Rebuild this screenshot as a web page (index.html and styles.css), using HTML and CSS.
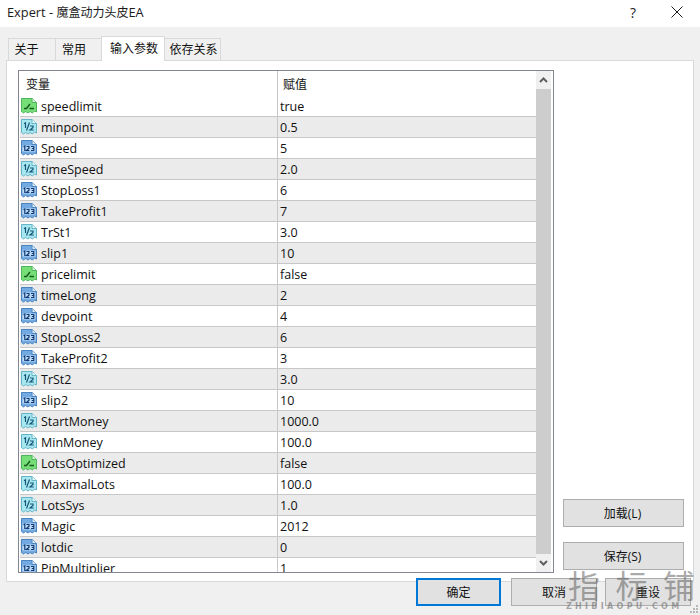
FILE: index.html
```html
<!DOCTYPE html>
<html lang="zh">
<head>
<meta charset="utf-8">
<title>Expert</title>
<link rel="stylesheet" href="styles.css">
</head>
<body>
<svg class="defs" width="0" height="0" aria-hidden="true">
  <symbol id="t-bool" viewBox="0 0 16 16">
    <path d="M.5 .5H11L15.500 4.500V14L13.500 13 11.500 15 9 13.500 7 15 4.500 13.500 2.500 15 .5 13.500Z" fill="#76de76" stroke="#4fb45f"/>
    <path d="M11 .5V4.500H15.500" fill="#d6f7d6" stroke="#4fb45f"/>
    <path d="M3 10.500H5.500L9 6M8.500 10.500H13" fill="none" stroke="#17581f" stroke-width="1.400"/>
  </symbol>
  <symbol id="t-real" viewBox="0 0 16 16">
    <path d="M.5 .5H11L15.500 4.500V14L13.500 13 11.500 15 9 13.500 7 15 4.500 13.500 2.500 15 .5 13.500Z" fill="#a8e6f0" stroke="#63b4c6"/>
    <path d="M11 .5V4.500H15.500" fill="#e6f9fb" stroke="#63b4c6"/>
    <path d="M3 4.800L4.500 3.800V9M5.500 11.500L8.500 3.500M9 7H12V8.500L9 11H12.800" fill="none" stroke="#14587a" stroke-width="1.200"/>
  </symbol>
  <symbol id="t-int" viewBox="0 0 16 16">
    <path d="M.5 .5H11L15.500 4.500V14L13.500 13 11.500 15 9 13.500 7 15 4.500 13.500 2.500 15 .5 13.500Z" fill="#74aae2" stroke="#4a84c0"/>
    <path d="M11 .5V4.500H15.500" fill="#dcebfa" stroke="#4a84c0"/>
    <rect x="1.500" y="5.500" width="13" height="6" fill="#bcd9f5"/>
    <path d="M2.500 6.800L3.800 6V11M5.500 6.500H8V8.300L5.500 10.500H8.300M10 6.500H12.800V10.500H10M10.800 8.500H12.800" fill="none" stroke="#0f3a75" stroke-width="1.200"/>
  </symbol>
</svg>

<div class="dialog">
  <header class="titlebar">
    <span class="title">Expert - <span class="title-cjk">魔盒动力头皮</span>EA</span>
    <div class="caption-btns">
      <span class="help">?</span>
      <svg class="close" width="12" height="12" viewBox="0 0 12 12"><path d="M.5 .5L11.500 11.500M11.500 .5L.5 11.500" stroke="#1a1a1a" stroke-width="1" fill="none"/></svg>
    </div>
  </header>

  <div class="content">
    <nav class="tabs">
      <span class="tab tab-1">关于</span>
      <span class="tab tab-2">常用</span>
      <span class="tab tab-active">输入参数</span>
      <span class="tab tab-4">依存关系</span>
    </nav>

    <section class="panel">
      <div class="list">
        <div class="list-main">
          <div class="row row-head"><span class="cell-name">变量</span><span class="cell-value">赋值</span></div>
          <div class="row"><svg class="ico"><use href="#t-bool"/></svg><span class="cell-name">speedlimit</span><span class="cell-value">true</span></div>
          <div class="row alt"><svg class="ico"><use href="#t-real"/></svg><span class="cell-name">minpoint</span><span class="cell-value">0.5</span></div>
          <div class="row"><svg class="ico"><use href="#t-int"/></svg><span class="cell-name">Speed</span><span class="cell-value">5</span></div>
          <div class="row alt"><svg class="ico"><use href="#t-real"/></svg><span class="cell-name">timeSpeed</span><span class="cell-value">2.0</span></div>
          <div class="row"><svg class="ico"><use href="#t-int"/></svg><span class="cell-name">StopLoss1</span><span class="cell-value">6</span></div>
          <div class="row alt"><svg class="ico"><use href="#t-int"/></svg><span class="cell-name">TakeProfit1</span><span class="cell-value">7</span></div>
          <div class="row"><svg class="ico"><use href="#t-real"/></svg><span class="cell-name">TrSt1</span><span class="cell-value">3.0</span></div>
          <div class="row alt"><svg class="ico"><use href="#t-int"/></svg><span class="cell-name">slip1</span><span class="cell-value">10</span></div>
          <div class="row"><svg class="ico"><use href="#t-bool"/></svg><span class="cell-name">pricelimit</span><span class="cell-value">false</span></div>
          <div class="row alt"><svg class="ico"><use href="#t-int"/></svg><span class="cell-name">timeLong</span><span class="cell-value">2</span></div>
          <div class="row"><svg class="ico"><use href="#t-int"/></svg><span class="cell-name">devpoint</span><span class="cell-value">4</span></div>
          <div class="row alt"><svg class="ico"><use href="#t-int"/></svg><span class="cell-name">StopLoss2</span><span class="cell-value">6</span></div>
          <div class="row"><svg class="ico"><use href="#t-int"/></svg><span class="cell-name">TakeProfit2</span><span class="cell-value">3</span></div>
          <div class="row alt"><svg class="ico"><use href="#t-real"/></svg><span class="cell-name">TrSt2</span><span class="cell-value">3.0</span></div>
          <div class="row"><svg class="ico"><use href="#t-int"/></svg><span class="cell-name">slip2</span><span class="cell-value">10</span></div>
          <div class="row alt"><svg class="ico"><use href="#t-real"/></svg><span class="cell-name">StartMoney</span><span class="cell-value">1000.0</span></div>
          <div class="row"><svg class="ico"><use href="#t-real"/></svg><span class="cell-name">MinMoney</span><span class="cell-value">100.0</span></div>
          <div class="row alt"><svg class="ico"><use href="#t-bool"/></svg><span class="cell-name">LotsOptimized</span><span class="cell-value">false</span></div>
          <div class="row"><svg class="ico"><use href="#t-real"/></svg><span class="cell-name">MaximalLots</span><span class="cell-value">100.0</span></div>
          <div class="row alt"><svg class="ico"><use href="#t-real"/></svg><span class="cell-name">LotsSys</span><span class="cell-value">1.0</span></div>
          <div class="row"><svg class="ico"><use href="#t-int"/></svg><span class="cell-name">Magic</span><span class="cell-value">2012</span></div>
          <div class="row alt"><svg class="ico"><use href="#t-int"/></svg><span class="cell-name">lotdic</span><span class="cell-value">0</span></div>
          <div class="row"><svg class="ico"><use href="#t-int"/></svg><span class="cell-name">PipMultiplier</span><span class="cell-value">1</span></div>
        </div>
        <div class="scrollbar">
          <svg class="arrow" width="15" height="18" viewBox="0 0 15 18"><path d="M4 11L7.500 7.500 11 11" fill="none" stroke="#606060" stroke-width="2"/></svg>
          <div class="thumb"></div>
          <svg class="arrow" width="15" height="18" viewBox="0 0 15 18"><path d="M4 7L7.500 10.500 11 7" fill="none" stroke="#606060" stroke-width="2"/></svg>
        </div>
      </div>
      <aside class="side-btns">
        <button class="btn btn-side">加载(L)</button>
        <button class="btn btn-side">保存(S)</button>
      </aside>
    </section>

    <footer class="footer">
      <button class="btn btn-foot btn-default">确定</button>
      <button class="btn btn-foot">取消</button>
      <button class="btn btn-foot">重设</button>
    </footer>
  </div>

  <div class="watermark">
    <div class="wm-cjk"><span>指</span><span>标</span><span>铺</span></div>
    <div class="wm-latin">ZHIBIAOPU.COM</div>
  </div>
  <svg class="grip" width="10" height="10" viewBox="0 0 10 10"><path d="M7 1h2v2H7zM4 4h2v2H4zM7 4h2v2H7zM1 7h2v2H1zM4 7h2v2H4zM7 7h2v2H7z" fill="#b8b8b8"/></svg>
</div>
</body>
</html>
```
FILE: styles.css
```css
* { box-sizing: border-box; }
html, body { margin: 0; padding: 0; }
body {
  width: 700px;
  height: 615px;
  overflow: hidden;
  font-family: "Open Sans", "Noto Sans CJK SC", sans-serif;
  font-size: 12px;
  color: #000;
  background: #f0f0f0;
}
.defs { position: absolute; }
.dialog { position: relative; width: 700px; height: 615px; overflow: hidden; }

.titlebar {
  height: 27px;
  background: #fff;
  display: flex;
  align-items: center;
  justify-content: space-between;
  padding: 0 17px 3px 7px;
}
.title { font-size: 12.800px; color: #1a1a1a; }
.title-cjk { font-size: 12px; }
.caption-btns { display: flex; align-items: center; gap: 35px; }
.help { font-size: 14px; color: #222; }
.close { display: block; }

.content { padding: 9px 6px 0; }

.tabs { display: flex; height: 24px; align-items: flex-end; padding-left: 2px; position: relative; z-index: 1; }
.tab {
  height: 22px;
  background: #f0f0f0;
  border: 1px solid #d9d9d9;
  border-bottom: none;
  margin-right: -1px;
  display: flex;
  align-items: center;
  justify-content: center;
  padding-bottom: 2px;
  font-size: 12px;
  color: #111;
}
.tab-1 { width: 48px; padding-right: 11px; }
.tab-2 { width: 47px; padding-right: 9px; }
.tab-active {
  width: 64px;
  height: 25px;
  background: #fff;
  margin-bottom: -1px;
  padding-bottom: 3px;
  padding-left: 2px;
  position: relative;
  z-index: 2;
}
.tab-4 { width: 57px; padding-left: 2px; }

.panel {
  height: 522px;
  background: #fff;
  border: 1px solid #d9d9d9;
  padding: 9px 9px 8px 11px;
  display: flex;
  gap: 9px;
}

.list {
  width: 536px;
  height: 503px;
  border: 1px solid #82878f;
  display: flex;
  background: #fff;
  padding-left: 1px;
  padding-right: 2px;
  overflow: hidden;
}
.list-main { width: 516px; overflow: hidden; height: 501px; }
.row {
  display: flex;
  align-items: center;
  height: 21px;
  border-bottom: 1px solid #c8c8c8;
  font-size: 12.500px;
  white-space: nowrap;
  color: #111;
  position: relative;
}
.row.alt { background: #ebebeb; }
.row-head { height: 25px; border-bottom: none; }
.row-head .cell-name { padding-left: 6px; width: 257px; font-size: 12px; }
.row-head .cell-value { font-size: 12px; padding-left: 5px; }
.ico { width: 16px; height: 16px; margin-left: 1px; flex: none; }
.cell-name { width: 240px; padding-left: 4px; flex: none; }
.cell-value { flex: 1; padding-left: 2px; border-left: 1px solid #c8c8c8; align-self: stretch; display: flex; align-items: center; }

.scrollbar { width: 15px; background: #f0f0f0; display: flex; flex-direction: column; }
.arrow { display: block; flex: none; }
.thumb { flex: 1; background: #cdcdcd; }

.side-btns {
  width: 121px;
  display: flex;
  flex-direction: column;
  justify-content: flex-end;
  gap: 15px;
  padding-bottom: 3px;
}
.btn {
  font-family: inherit;
  font-size: 12px;
  color: #111;
  background: #e1e1e1;
  border: 1px solid #adadad;
  padding: 0;
  border-radius: 0;
}
.btn-side { height: 28px; padding-right: 2px; }

.footer {
  display: flex;
  justify-content: flex-end;
  gap: 10px;
  margin-top: -4px;
  padding-right: 3px;
  position: relative;
}
.btn-foot { width: 86px; height: 28px; }
.btn-foot:last-child { margin-left: -2px; }
.btn-default { width: 85px; border: 2px solid #0078d7; }

.watermark {
  position: absolute;
  left: 566px;
  top: 566px;
  width: 134px;
  pointer-events: none;
  color: rgba(95, 95, 95, 0.55);
}
.wm-cjk {
  display: flex;
  justify-content: space-between;
  font-family: "Noto Sans CJK SC", sans-serif;
  font-size: 32px;
  line-height: 37px;
  padding: 0 5px 0 2px;
}
.wm-latin {
  font-family: "DejaVu Sans", sans-serif;
  font-weight: bold;
  font-size: 8px;
  letter-spacing: 3.300px;
  line-height: 8px;
  color: rgba(110, 110, 110, 0.6);
  white-space: nowrap;
}
.grip { position: absolute; right: 1px; bottom: 1px; }
```
